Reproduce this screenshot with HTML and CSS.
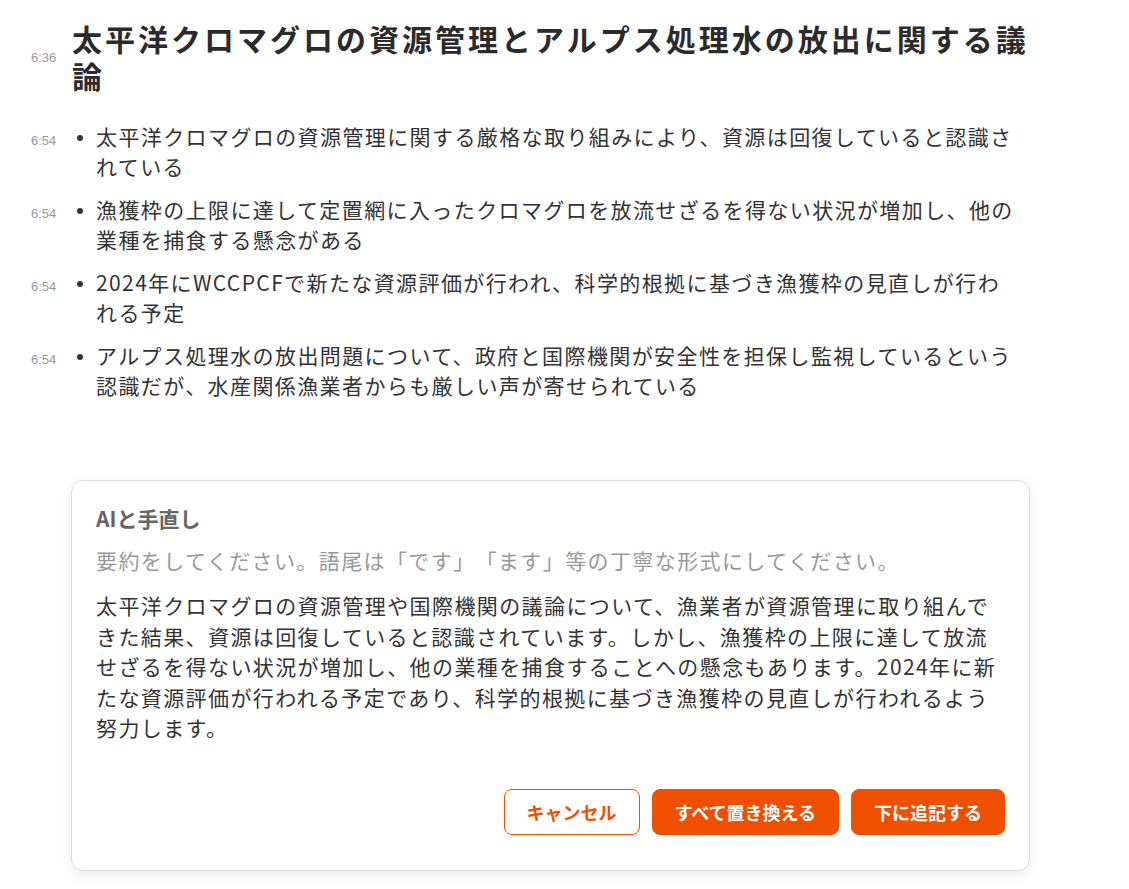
FILE: index.html
```html
<!DOCTYPE html>
<html lang="ja">
<head>
    <meta charset="UTF-8">
    <meta name="viewport" content="width=device-width, initial-scale=1.0">
    <title>議事録</title>
    <link rel="stylesheet" href="styles.css">
</head>
<body>

    <main class="page">
        <section class="topic">
            <div class="topic-head">
                <span class="time">6:36</span>
                <h1>太平洋クロマグロの資源管理とアルプス処理水の放出に関する議論</h1>
            </div>

            <ul class="points">
                <li>
                    <span class="time">6:54</span>
                    <span class="dot"></span>
                    <p>太平洋クロマグロの資源管理に関する厳格な取り組みにより、資源は回復していると認識されている</p>
                </li>
                <li>
                    <span class="time">6:54</span>
                    <span class="dot"></span>
                    <p>漁獲枠の上限に達して定置網に入ったクロマグロを放流せざるを得ない状況が増加し、他の業種を捕食する懸念がある</p>
                </li>
                <li>
                    <span class="time">6:54</span>
                    <span class="dot"></span>
                    <p>2024年にWCCPCFで新たな資源評価が行われ、科学的根拠に基づき漁獲枠の見直しが行われる予定</p>
                </li>
                <li>
                    <span class="time">6:54</span>
                    <span class="dot"></span>
                    <p>アルプス処理水の放出問題について、政府と国際機関が安全性を担保し監視しているという認識だが、水産関係漁業者からも厳しい声が寄せられている</p>
                </li>
            </ul>
        </section>

        <div class="rewrite-card">
            <h2>AIと手直し</h2>
            <p class="prompt">要約をしてください。語尾は「です」「ます」等の丁寧な形式にしてください。</p>
            <p class="result">太平洋クロマグロの資源管理や国際機関の議論について、漁業者が資源管理に取り組んできた結果、資源は回復していると認識されています。しかし、漁獲枠の上限に達して放流せざるを得ない状況が増加し、他の業種を捕食することへの懸念もあります。2024年に新たな資源評価が行われる予定であり、科学的根拠に基づき漁獲枠の見直しが行われるよう努力します。</p>
            <div class="actions">
                <button class="btn btn-outline">キャンセル</button>
                <button class="btn btn-fill">すべて置き換える</button>
                <button class="btn btn-fill">下に追記する</button>
            </div>
        </div>
    </main>

</body>
</html>
```

FILE: styles.css
```css
body {
    margin: 0;
    background: #fff;
    color: #333;
    font-family: "Noto Sans CJK JP", "Noto Sans", sans-serif;
    text-spacing-trim: space-all;
}
.page {
    padding: 20px 0 20px 31px;
    width: 999px;
}
.time {
    flex: 0 0 41px;
    font-family: "Liberation Sans", Arial, sans-serif;
    font-size: 13px;
    color: #999;
}
.topic-head {
    display: flex;
    align-items: center;
}
.topic-head h1 {
    margin: 0;
    width: 958px;
    font-size: 30px;
    line-height: 37px;
    letter-spacing: 3px;
    font-weight: 700;
    color: #2b2b2b;
}
.points {
    list-style: none;
    margin: 27px 0 0;
    padding: 0;
}
.points li {
    display: flex;
    align-items: baseline;
    margin-bottom: 13px;
}
.dot {
    flex: 0 0 6px;
    height: 6px;
    margin: 0 13px 0 5px;
    border-radius: 50%;
    background: #333;
    position: relative;
    top: -4px;
}
.points p {
    margin: 0;
    width: 921px;
    font-size: 21px;
    line-height: 30px;
    letter-spacing: 1.4px;
    color: #333;
}
.rewrite-card {
    box-sizing: border-box;
    width: 959px;
    margin: 80px 0 0 40px;
    padding: 22px 24px 35px;
    border: 1px solid #ddd;
    border-radius: 12px;
    box-shadow: 0 4px 14px rgba(0, 0, 0, 0.08);
    background: #fff;
}
.rewrite-card h2 {
    margin: 0;
    font-size: 21px;
    line-height: 30px;
    font-weight: 700;
    color: #666;
}
.prompt {
    margin: 12px 0 0;
    font-size: 21px;
    line-height: 30px;
    letter-spacing: 1.4px;
    color: #999;
}
.result {
    margin: 15px 0 0;
    font-size: 21px;
    line-height: 30.5px;
    letter-spacing: 1.4px;
    color: #333;
}
.actions {
    display: flex;
    justify-content: flex-end;
    gap: 12px;
    margin-top: 46px;
}
.btn {
    height: 46px;
    padding: 0 22px;
    border-radius: 8px;
    font-family: "Noto Sans CJK JP", sans-serif;
    font-size: 18px;
    font-weight: 700;
    cursor: pointer;
}
.btn-outline {
    border: 1px solid #f04f00;
    background: #fff;
    color: #f04f00;
}
.btn-fill {
    border: 1px solid #f04f00;
    background: #f04f00;
    color: #fff;
}
```
